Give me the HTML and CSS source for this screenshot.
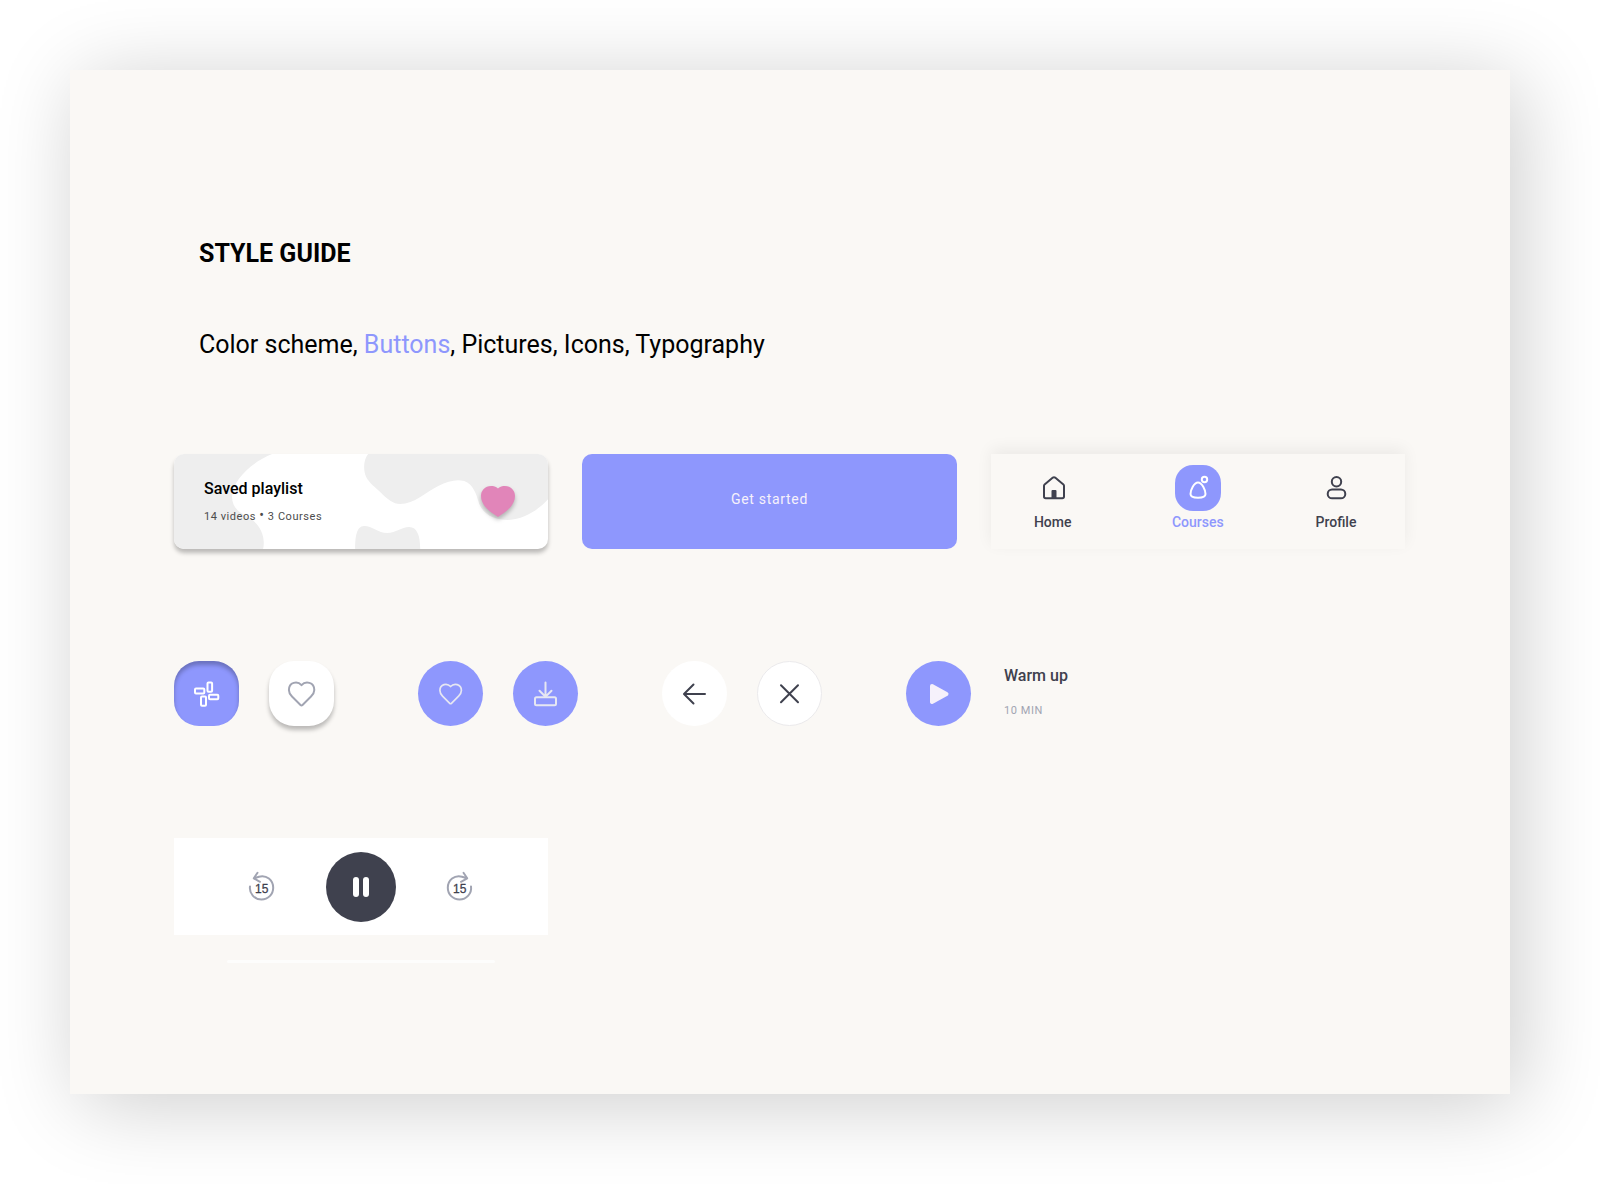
FILE: index.html
```html
<!DOCTYPE html>
<html lang="en">

<head>
    <meta charset="UTF-8">
    <meta name="viewport" content="width=device-width, initial-scale=1.0">
    <title>Style guide - Buttons</title>
    <link rel="stylesheet" href="styles.css">
</head>

<body>
    <main class="sheet">
        <header class="intro">
            <h1>STYLE GUIDE</h1>
            <p>Color scheme, <span class="current">Buttons</span>, Pictures, Icons, Typography</p>
        </header>

        <section class="cards">
            <a class="playlist" href="#playlist">
                <svg class="playlist-bg" viewBox="0 0 374 95" preserveAspectRatio="none" aria-hidden="true">
                    <path d="M0 0H98C78 8 58 26 58 43C58 53 65 59 74 63C85 69 92 82 89 95H0Z" />
                    <path d="M194 0C189 6 189 17 192 23C195 29 202 34 207 39C213 45 219 50 226 50C240 50 252 38 264 32C274 27 282 25 290 27C299 30 302 40 305 50C310 61 320 66 334 66C350 65 364 56 374 45V0Z" />
                    <path d="M181 95C181 84 182 72 190 72C198 72 204 79 213 79C222 79 227 73 235 73C243 73 246 82 246 95Z" />
                </svg>
                <span class="playlist-text">
                    <strong>Saved playlist</strong>
                    <small>14 videos <b>•</b> 3 Courses</small>
                </span>
                <svg class="playlist-heart" width="34" height="31" viewBox="0 0 34 31" aria-hidden="true">
                    <path d="M17 2.500C19 .6 21.500 0 24 0C30 0 34 4.500 34 10C34 20 24 26.500 17 31C10 26.500 0 20 0 10C0 4.500 4 0 10 0C12.500 0 15 .6 17 2.500Z" />
                </svg>
            </a>

            <button class="start" type="button">Get started</button>

            <nav class="tabs">
                <a href="#home">
                    <span class="tab-icon">
                        <svg width="24" height="24" viewBox="0 0 24 24" aria-hidden="true">
                            <path d="M3 9.800Q3 9 3.600 8.500L11.900 1.600Q13 .8 14.100 1.600L22.400 8.500Q23 9 23 9.800V20.500Q23 22.200 21.300 22.200H4.700Q3 22.200 3 20.500Z" />
                            <path class="solid" d="M10.500 15Q10.500 14 11.500 14H14.500Q15.500 14 15.500 15V22H10.500Z" />
                        </svg>
                    </span>
                    Home
                </a>
                <a class="active" href="#courses">
                    <span class="tab-icon">
                        <svg width="24" height="24" viewBox="0 0 24 24" aria-hidden="true">
                            <path d="M12 6.500C16 6.500 19.500 14 19.500 18C19.500 20.700 16 21.800 12 21.800S4.500 20.700 4.500 18C4.500 14 8 6.500 12 6.500Z" />
                            <circle cx="18.500" cy="3.500" r="2.700" />
                        </svg>
                    </span>
                    Courses
                </a>
                <a href="#profile">
                    <span class="tab-icon">
                        <svg width="24" height="24" viewBox="0 0 24 24" aria-hidden="true">
                            <circle cx="12.500" cy="5.700" r="4.700" />
                            <rect x="3.700" y="13.500" width="17.600" height="8.800" rx="4.400" />
                        </svg>
                    </span>
                    Profile
                </a>
            </nav>
        </section>

        <section class="controls">
            <div class="group">
                <button class="icon-btn soft pressed" type="button" aria-label="Categories">
                    <svg width="26" height="26" viewBox="0 0 26 26" aria-hidden="true">
                        <rect x="1" y="7.500" width="9.300" height="5" rx="1" />
                        <rect x="13.500" y="1.400" width="4.600" height="9.300" rx="1" />
                        <rect x="15" y="13.700" width="9.300" height="4.600" rx="1" />
                        <rect x="7" y="15.400" width="5" height="9.300" rx="1" />
                    </svg>
                </button>
                <button class="icon-btn soft raised" type="button" aria-label="Favourites">
                    <svg width="28" height="26" viewBox="0 0 28 26" aria-hidden="true">
                        <path d="M13.500 4.200C17.500 -.4 26.300 1 26.300 9C26.300 12 25 13.500 23 15.500L14.500 24Q13.500 25 12.500 24L4 15.500C2 13.500 .9 12 .9 9C.9 1 9.500 -.4 13.500 4.200Z" />
                    </svg>
                </button>
            </div>

            <div class="group">
                <button class="icon-btn round" type="button" aria-label="Like">
                    <svg width="24" height="22" viewBox="0 0 28 26" aria-hidden="true">
                        <path d="M13.500 4.200C17.500 -.4 26.300 1 26.300 9C26.300 12 25 13.500 23 15.500L14.500 24Q13.500 25 12.500 24L4 15.500C2 13.500 .9 12 .9 9C.9 1 9.500 -.4 13.500 4.200Z" />
                    </svg>
                </button>
                <button class="icon-btn round" type="button" aria-label="Download">
                    <svg width="24" height="26" viewBox="0 0 24 26" aria-hidden="true">
                        <path d="M11.500 1.500V16M5.500 9.800L11.500 15.800L17.500 9.800" />
                        <rect x="1" y="16.200" width="21" height="8" rx="1.500" />
                    </svg>
                </button>
            </div>

            <div class="group">
                <button class="icon-btn plain" type="button" aria-label="Back">
                    <svg width="24" height="22" viewBox="0 0 24 22" aria-hidden="true">
                        <path d="M22 11H1.500M10.500 1.500L1 11L10.500 20.500" />
                    </svg>
                </button>
                <button class="icon-btn plain outlined" type="button" aria-label="Close">
                    <svg width="20" height="20" viewBox="0 0 20 20" aria-hidden="true">
                        <path d="M1 1.200L18 18.200M18 1.200L1 18.200" />
                    </svg>
                </button>
            </div>

            <div class="track">
                <button class="icon-btn round" type="button" aria-label="Play">
                    <svg class="play" width="20" height="20" viewBox="0 0 20 20" aria-hidden="true">
                        <path d="M3 2L17.500 10L3 18Z" />
                    </svg>
                </button>
                <div class="track-text">
                    <h2>Warm up</h2>
                    <p>10 MIN</p>
                </div>
            </div>
        </section>

        <section class="player-block">
            <div class="player">
                <button class="skip" type="button" aria-label="Back 15 seconds">
                    <svg width="28" height="30" viewBox="0 0 28 30" aria-hidden="true">
                        <path d="M2 14.500C1 21.500 6.500 27.500 13.500 27.500C20 27.500 25.200 22.500 25.200 15.800C25.200 8 18.500 2.700 11 4.700L6 6.300M9.500 .8L5.800 6.300L12 9.800" />
                        <text x="7" y="21">15</text>
                    </svg>
                </button>
                <button class="pause" type="button" aria-label="Pause">
                    <svg width="18" height="20" viewBox="0 0 18 20" aria-hidden="true">
                        <rect x="1" y="0" width="6" height="20" rx="3" />
                        <rect x="11" y="0" width="6" height="20" rx="3" />
                    </svg>
                </button>
                <button class="skip" type="button" aria-label="Forward 15 seconds">
                    <svg width="28" height="30" viewBox="0 0 28 30" aria-hidden="true">
                        <path d="M25 14.500C26 21.500 20.500 27.500 13.500 27.500C7 27.500 1.800 22.500 1.800 15.800C1.800 8 8.500 2.700 16 4.700L21 6.300M17.500 .8L21.200 6.300L15 9.800" />
                        <text x="7" y="21">15</text>
                    </svg>
                </button>
            </div>
            <div class="track-line"></div>
        </section>
    </main>
</body>

</html>
```
FILE: styles.css
```css
* {
    box-sizing: border-box;
}

body {
    margin: 0;
    padding: 70px 90px 90px 70px;
    min-height: 100vh;
    display: flex;
    background-color: #fff;
    font-family: Roboto, "Liberation Sans", sans-serif;
    color: #3f414e;
}

h1, h2, p {
    margin: 0;
}

a {
    color: inherit;
    text-decoration: none;
}

button {
    padding: 0;
    border: none;
    font-family: inherit;
    cursor: pointer;
}

svg {
    display: block;
    fill: none;
    stroke: currentColor;
    stroke-width: 2;
    stroke-linecap: round;
    stroke-linejoin: round;
    overflow: visible;
}

.sheet {
    flex: 1;
    padding: 169px 105px 0 104px;
    background-color: #faf8f5;
    box-shadow: 10px 10px 80px rgba(0, 0, 0, 0.2);
}

.intro {
    padding-left: 25px;
    color: #000;
    font-size: 25px;
    line-height: 30px;
}

.intro h1 {
    font-size: 25px;
    font-weight: 700;
    margin-bottom: 61px;
}

.current {
    color: #8e97fd;
}

/* Cards */
.cards {
    display: grid;
    grid-template-columns: 374fr 374fr 414fr;
    gap: 34px;
    margin-top: 94px;
}

.playlist {
    position: relative;
    display: flex;
    align-items: center;
    justify-content: space-between;
    min-height: 95px;
    padding: 0 33px 0 30px;
    border-radius: 10px;
    background-color: #fff;
    box-shadow: 0 4px 4px rgba(0, 0, 0, 0.25);
}

.playlist-bg {
    position: absolute;
    inset: 0;
    width: 100%;
    height: 100%;
    border-radius: 10px;
    overflow: hidden;
    fill: #eee;
    stroke: none;
}

.playlist-text {
    position: relative;
    display: flex;
    flex-direction: column;
    gap: 9px;
}

.playlist strong {
    font-size: 16px;
    line-height: 20px;
    font-weight: 500;
    color: #000;
}

.playlist small {
    font-size: 11px;
    line-height: 16px;
    letter-spacing: 0.05em;
    color: #4c4c4c;
}

.playlist b {
    font-size: 14px;
    line-height: 1;
    font-weight: 400;
}

.playlist-heart {
    position: relative;
    fill: #e185b9;
    stroke: none;
    filter: drop-shadow(0 3px 2px rgba(0, 0, 0, 0.25));
}

.start {
    padding-bottom: 6px;
    border-radius: 10px;
    background-color: #8e97fd;
    color: #f6f1fb;
    font-size: 14px;
    letter-spacing: 0.05em;
}

.tabs {
    display: grid;
    grid-template-columns: 124fr 166fr 110fr;
    align-items: center;
    padding: 0 14px 6px 0;
    background-color: #faf8f5;
    box-shadow: 0 -5px 15px rgba(0, 0, 0, 0.06);
    font-size: 14px;
    line-height: 20px;
    font-weight: 500;
}

.tabs a {
    display: flex;
    flex-direction: column;
    align-items: center;
    gap: 1px;
}

.tab-icon {
    display: flex;
    align-items: center;
    justify-content: center;
    width: 46px;
    height: 46px;
    border-radius: 18px;
}

.solid {
    fill: currentColor;
    stroke: none;
}

.active {
    color: #8e97fd;
}

.active .tab-icon {
    background-color: #8e97fd;
    color: #fff;
}

/* Icon buttons */
.controls {
    display: flex;
    align-items: center;
    gap: 84px;
    margin-top: 112px;
}

.group {
    display: flex;
    gap: 30px;
}

.icon-btn {
    display: flex;
    align-items: center;
    justify-content: center;
    width: 65px;
    height: 65px;
    color: #e6e7f2;
}

.soft {
    border-radius: 25px;
}

.pressed {
    background-color: #8e97fd;
    box-shadow: inset 0 4px 4px rgba(0, 0, 0, 0.25);
    color: #fff;
}

.raised {
    background-color: #fff;
    box-shadow: 0 4px 4px rgba(0, 0, 0, 0.25);
    color: #a1a4b2;
}

.round {
    border-radius: 50%;
    background-color: #8e97fd;
}

.plain {
    border-radius: 50%;
    background-color: #fff;
    color: #3f414e;
}

.outlined {
    border: 1px solid #ebeaec;
}

.play {
    fill: #f6f1fb;
    stroke: #f6f1fb;
    stroke-width: 4;
}

.track {
    display: flex;
    align-items: center;
    gap: 33px;
}

.track-text {
    display: flex;
    flex-direction: column;
    gap: 17px;
    padding-bottom: 3px;
}

.track-text h2 {
    font-size: 16px;
    line-height: 20px;
    font-weight: 500;
}

.track-text p {
    font-size: 11px;
    line-height: 16px;
    letter-spacing: 0.05em;
    color: #a1a4b2;
}

/* Player */
.player-block {
    width: 374px;
    margin-top: 112px;
}

.player {
    display: flex;
    align-items: center;
    justify-content: center;
    gap: 50px;
    padding: 14px 0 13px;
    background-color: #fff;
}

.skip {
    background: none;
    color: #a1a4b2;
}

.skip text {
    fill: #3f414e;
    stroke: #3f414e;
    stroke-width: 0.3;
    font-family: "Liberation Sans", Arial, sans-serif;
    font-size: 12px;
}

.pause {
    display: flex;
    align-items: center;
    justify-content: center;
    width: 70px;
    height: 70px;
    border-radius: 50%;
    background-color: #3f414e;
}

.pause svg {
    fill: #fff;
    stroke: none;
}

.track-line {
    height: 3px;
    margin: 25px 53px 0;
    border-radius: 2px;
    background-color: #fdfdfc;
}
```
